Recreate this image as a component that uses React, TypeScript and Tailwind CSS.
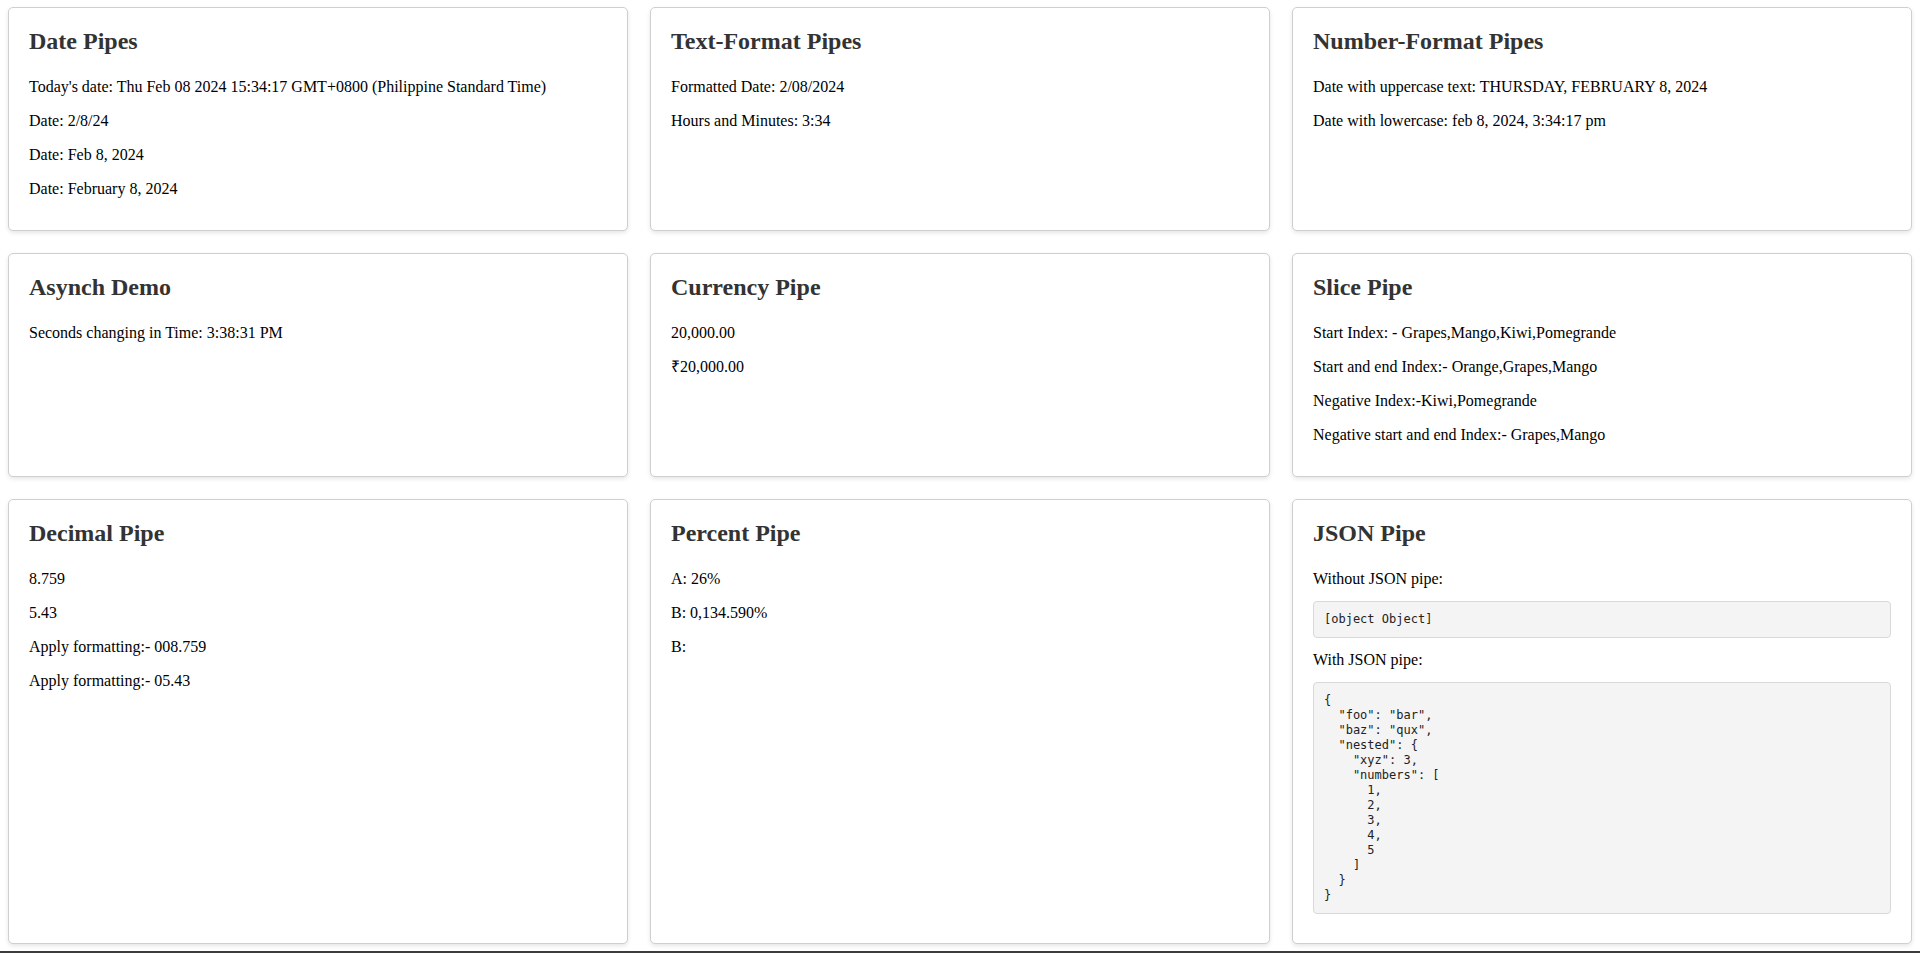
import React from 'react';

interface PipeCard {
  title: string;
  lines: string[];
}

const jsonValue = {
  foo: 'bar',
  baz: 'qux',
  nested: { xyz: 3, numbers: [1, 2, 3, 4, 5] },
};

const cards: PipeCard[] = [
  {
    title: 'Date Pipes',
    lines: [
      "Today's date: Thu Feb 08 2024 15:34:17 GMT+0800 (Philippine Standard Time)",
      'Date: 2/8/24',
      'Date: Feb 8, 2024',
      'Date: February 8, 2024',
    ],
  },
  {
    title: 'Text-Format Pipes',
    lines: ['Formatted Date: 2/08/2024', 'Hours and Minutes: 3:34'],
  },
  {
    title: 'Number-Format Pipes',
    lines: [
      'Date with uppercase text: THURSDAY, FEBRUARY 8, 2024',
      'Date with lowercase: feb 8, 2024, 3:34:17 pm',
    ],
  },
  {
    title: 'Asynch Demo',
    lines: ['Seconds changing in Time: 3:38:31 PM'],
  },
  {
    title: 'Currency Pipe',
    lines: ['20,000.00', '₹20,000.00'],
  },
  {
    title: 'Slice Pipe',
    lines: [
      'Start Index: - Grapes,Mango,Kiwi,Pomegrande',
      'Start and end Index:- Orange,Grapes,Mango',
      'Negative Index:-Kiwi,Pomegrande',
      'Negative start and end Index:- Grapes,Mango',
    ],
  },
  {
    title: 'Decimal Pipe',
    lines: ['8.759', '5.43', 'Apply formatting:- 008.759', 'Apply formatting:- 05.43'],
  },
  {
    title: 'Percent Pipe',
    lines: ['A: 26%', 'B: 0,134.590%', 'B:'],
  },
];

const Card: React.FC<{ title: string; children: React.ReactNode }> = ({ title, children }) => (
  <div className="bg-white border border-[#cfcfcf] rounded-[5px] shadow-[0_2px_4px_rgba(0,0,0,0.1)] pt-5 px-5 pb-4">
    <h2 className="text-[24px] leading-[27px] font-bold text-[#333333] mb-[23px]">{title}</h2>
    {children}
  </div>
);

const App: React.FC = () => {
  return (
    <main
      className="min-h-screen bg-white text-black px-2 pt-[7px] pb-2"
      style={{ fontFamily: '"Liberation Serif", "Times New Roman", serif' }}
    >
      <div className="grid grid-cols-3 gap-[22px]">
        {cards.map((card, index) => (
          <Card key={index} title={card.title}>
            {card.lines.map((line, i) => (
              <p key={i} className="text-[16px] leading-[18px] mb-4">
                {line}
              </p>
            ))}
          </Card>
        ))}
        <Card title="JSON Pipe">
          <p className="text-[16px] leading-[18px] mb-[13px]">Without JSON pipe:</p>
          <pre className="bg-[#f4f4f4] border border-[#d9d9d9] rounded-[4px] p-[10px] text-[12px] leading-[15px] text-[#222] mb-[13px] font-['DejaVu_Sans_Mono',monospace]">
            [object Object]
          </pre>
          <p className="text-[16px] leading-[18px] mb-[13px]">With JSON pipe:</p>
          <pre className="bg-[#f4f4f4] border border-[#d9d9d9] rounded-[4px] p-[10px] text-[12px] leading-[15px] text-[#222] mb-[13px] font-['DejaVu_Sans_Mono',monospace]">
            {JSON.stringify(jsonValue, null, 2)}
          </pre>
        </Card>
      </div>
      <div className="fixed bottom-0 left-0 right-0 h-[2px] bg-[#3c3c3c]" />
    </main>
  );
};

export default App;
